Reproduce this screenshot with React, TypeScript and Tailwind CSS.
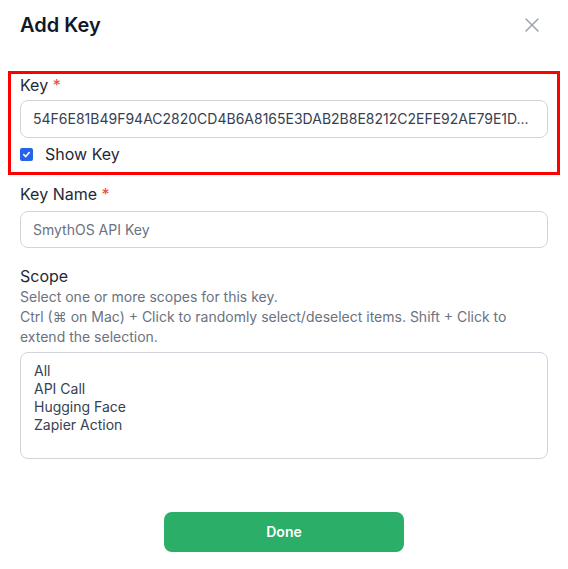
import React from "react";

export default function App() {
  return (
    <div className="w-[568px] h-[569px] bg-white px-5 pt-[11px] text-[#1f2937]" style={{ fontFamily: "Inter, 'Noto Sans', sans-serif" }}>
      <div className="flex items-center justify-between h-7">
        <h2 className="text-xl leading-7 font-semibold text-[#111827]">Add Key</h2>
        <button className="mr-[8px] text-[#9ca3af]" aria-label="Close">
          <svg width="16" height="16" viewBox="0 0 16 16" fill="none" stroke="currentColor" strokeWidth="1.5" strokeLinecap="round">
            <path d="M2 2 L14 14 M14 2 L2 14" />
          </svg>
        </button>
      </div>

      <div className="mt-[32px] -mx-3 border-[3px] border-[#ff0000] px-[9px] pt-[1px] pb-[8px]">
        <label className="block text-base leading-5 text-[#1f2937]">
          Key <span className="text-[#ef4444]">*</span>
        </label>
        <div className="mt-[5px] h-[38px] rounded-lg border border-[#d1d5db] px-3 flex items-center text-sm text-[#374151] overflow-hidden whitespace-nowrap">
          54F6E81B49F94AC2820CD4B6A8165E3DAB2B8E8212C2EFE92AE79E1D...
        </div>
        <label className="mt-[6px] flex items-center gap-3 text-base leading-5 text-[#1f2937]">
          <span className="w-[13px] h-[13px] rounded-[2px] bg-[#2563eb] flex items-center justify-center">
            <svg width="9" height="9" viewBox="0 0 10 10" fill="none" stroke="white" strokeWidth="1.8" strokeLinecap="round" strokeLinejoin="round">
              <path d="M2 5.2 L4.2 7.3 L8 2.8" />
            </svg>
          </span>
          Show Key
        </label>
      </div>

      <div className="mt-[9px]">
        <label className="block text-base leading-5 text-[#1f2937]">
          Key Name <span className="text-[#ef4444]">*</span>
        </label>
        <div className="mt-[7px] h-[37px] rounded-lg border border-[#d1d5db] px-3 flex items-center text-sm text-[#6b7280]">
          SmythOS API Key
        </div>
      </div>

      <div className="mt-[18px]">
        <label className="block text-base leading-5 text-[#1f2937]">Scope</label>
        <p className="mt-[1px] text-sm leading-5 text-[#6b7280]">
          Select one or more scopes for this key.
          <br />
          Ctrl (⌘ on Mac) + Click to randomly select/deselect items. Shift + Click to extend the selection.
        </p>
        <div className="mt-[5px] h-[107px] rounded-lg border border-[#d1d5db] px-[13px] pt-[9px] text-sm leading-[18px] text-[#374151]">
          <div>All</div>
          <div>API Call</div>
          <div>Hugging Face</div>
          <div>Zapier Action</div>
        </div>
      </div>

      <div className="mt-[53px] flex justify-center">
        <button className="w-[240px] h-[40px] rounded-lg bg-[#2bae67] text-white text-sm font-semibold">
          Done
        </button>
      </div>
    </div>
  );
}
